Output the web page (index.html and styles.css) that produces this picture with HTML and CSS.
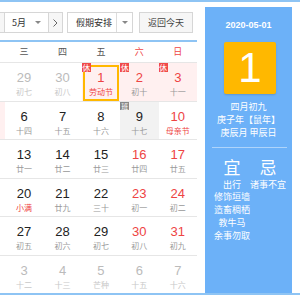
FILE: index.html
```html
<!DOCTYPE html>
<html lang="zh-CN">
<head>
<meta charset="utf-8">
<title>万年历</title>
<link rel="stylesheet" href="styles.css">
</head>
<body>
<div class="cal">
  <div class="main">
    <div class="toolbar">
      <div class="sel sel-year">2020年<span class="caret"></span></div>
      <div class="nav"><svg width="5" height="8" viewBox="0 0 5 8"><polyline points="4.5,0.5 1,4 4.5,7.5" fill="none" stroke="#666" stroke-width="1"/></svg></div>
      <div class="sel sel-month">5月<span class="caret"></span></div>
      <div class="nav"><svg width="5" height="8" viewBox="0 0 5 8"><polyline points="0.5,0.5 4,4 0.5,7.5" fill="none" stroke="#666" stroke-width="1"/></svg></div>
      <div class="sel sel-hol">假期安排<span class="split"><span class="caret"></span></span></div>
      <div class="btn">返回今天</div>
    </div>
    <div class="week">
      <span>一</span><span>二</span><span>三</span><span>四</span><span>五</span><span class="red">六</span><span class="red">日</span>
    </div>
    <div class="days">
      <div class="day other"><b>27</b><i>初五</i></div>
      <div class="day other"><b>28</b><i>初六</i></div>
      <div class="day other"><b>29</b><i>初七</i></div>
      <div class="day other"><b>30</b><i>初八</i></div>
      <div class="day hol today"><em class="tag">休</em><b>1</b><i class="fest">劳动节</i></div>
      <div class="day hol"><em class="tag">休</em><b>2</b><i>初十</i></div>
      <div class="day hol"><em class="tag">休</em><b>3</b><i>十一</i></div>

      <div class="day hol"><em class="tag">休</em><b>4</b><i class="fest">青年节</i></div>
      <div class="day hol"><em class="tag">休</em><b>5</b><i class="fest">立夏</i></div>
      <div class="day"><b>6</b><i>十四</i></div>
      <div class="day"><b>7</b><i>十五</i></div>
      <div class="day"><b>8</b><i>十六</i></div>
      <div class="day work"><em class="tag tag-work">班</em><b>9</b><i>十七</i></div>
      <div class="day we"><b>10</b><i class="fest">母亲节</i></div>

      <div class="day"><b>11</b><i>十九</i></div>
      <div class="day"><b>12</b><i>二十</i></div>
      <div class="day"><b>13</b><i>廿一</i></div>
      <div class="day"><b>14</b><i>廿二</i></div>
      <div class="day"><b>15</b><i>廿三</i></div>
      <div class="day we"><b>16</b><i>廿四</i></div>
      <div class="day we"><b>17</b><i>廿五</i></div>

      <div class="day"><b>18</b><i>廿六</i></div>
      <div class="day"><b>19</b><i>廿七</i></div>
      <div class="day"><b>20</b><i class="fest">小满</i></div>
      <div class="day"><b>21</b><i>廿九</i></div>
      <div class="day"><b>22</b><i>三十</i></div>
      <div class="day we"><b>23</b><i>初一</i></div>
      <div class="day we"><b>24</b><i>初二</i></div>

      <div class="day"><b>25</b><i>初三</i></div>
      <div class="day"><b>26</b><i>初四</i></div>
      <div class="day"><b>27</b><i>初五</i></div>
      <div class="day"><b>28</b><i>初六</i></div>
      <div class="day"><b>29</b><i>初七</i></div>
      <div class="day we"><b>30</b><i>初八</i></div>
      <div class="day we"><b>31</b><i>初九</i></div>

      <div class="day other"><b>1</b><i>儿童节</i></div>
      <div class="day other"><b>2</b><i>十一</i></div>
      <div class="day other"><b>3</b><i>十二</i></div>
      <div class="day other"><b>4</b><i>十三</i></div>
      <div class="day other"><b>5</b><i>芒种</i></div>
      <div class="day other"><b>6</b><i>十五</i></div>
      <div class="day other"><b>7</b><i>十六</i></div>
    </div>
  </div>
  <div class="side">
    <div class="side-date">2020-05-01</div>
    <div class="big">1</div>
    <div class="lunar-info">
      <div>四月初九</div>
      <div>庚子年【鼠年】</div>
      <div>庚辰月 甲辰日</div>
    </div>
    <div class="sep"></div>
    <div class="yj">
      <div class="yj-h">宜</div>
      <div class="yj-h">忌</div>
      <div class="yj-list">
        <div>出行</div>
        <div>修饰垣墙</div>
        <div>造畜稠栖</div>
        <div>教牛马</div>
        <div>余事勿取</div>
      </div>
      <div class="yj-list">
        <div>诸事不宜</div>
      </div>
    </div>
  </div>
</div>
</body>
</html>
```
FILE: styles.css
```css
html, body {
  margin: 0;
  padding: 0;
  background: #fff;
  overflow: hidden;
}
body {
  width: 300px;
  height: 300px;
  font-family: "Liberation Sans", "Noto Sans CJK SC", sans-serif;
  color: #333;
}
.cal {
  display: flex;
  align-items: flex-start;
  width: 372px;
  margin-left: -72px;
  border-top: 2px solid #8ec4f4;
  border-bottom: 2px solid #8ec4f4;
}
.main {
  flex: none;
  width: 269px;
}
.toolbar {
  display: flex;
  align-items: center;
  height: 21px;
  padding: 10px 0 7px 2px;
  border-bottom: 2px solid #8ec4f4;
  font-family: "Noto Sans CJK SC", sans-serif;
  font-size: 9px;
  color: #333;
}
.sel, .nav, .btn {
  box-sizing: border-box;
  height: 21px;
  border: 1px solid #d6d6d6;
  display: flex;
  align-items: center;
  line-height: 19px;
}
.sel {
  background: #fff;
  position: relative;
}
.sel-year {
  width: 56px;
  padding-left: 8px;
  margin-right: 4px;
}
.sel-month {
  width: 43px;
  padding-left: 7px;
  border-left: none;
  border-right: none;
}
.caret {
  width: 0;
  height: 0;
  border-left: 3px solid transparent;
  border-right: 3px solid transparent;
  border-top: 3px solid #888;
}
.sel-year .caret, .sel-month .caret {
  margin-left: auto;
  margin-right: 7px;
}
.nav {
  width: 15px;
  background: #f6f6f6;
  justify-content: center;
}
.sel-hol {
  width: 66px;
  margin-left: 4px;
  padding-left: 8px;
}
.split {
  margin-left: auto;
  width: 15px;
  height: 100%;
  border-left: 1px solid #dcdcdc;
  display: flex;
  align-items: center;
  justify-content: center;
}
.btn {
  width: 54px;
  margin-left: 6px;
  background: #f6f6f6;
  justify-content: center;
  color: #444;
}
.week {
  display: grid;
  grid-template-columns: repeat(7, 1fr);
  height: 20px;
  line-height: 20px;
  text-align: center;
  font-family: "Noto Sans CJK SC", sans-serif;
  font-size: 9px;
  color: #555;
}
.week .red {
  color: #ee4444;
}
.days {
  display: grid;
  grid-template-columns: repeat(7, 1fr);
  grid-auto-rows: 38.5px;
}
.day {
  position: relative;
  box-sizing: border-box;
  border-top: 1px solid #e6e6e6;
  padding-top: 7px;
  text-align: center;
}
.day b {
  display: block;
  font-weight: normal;
  font-family: "Liberation Sans", sans-serif;
  font-size: 13px;
  line-height: 16px;
  color: #222;
}
.day i {
  display: block;
  font-style: normal;
  font-family: "Noto Sans CJK SC", sans-serif;
  font-size: 8px;
  line-height: 12px;
  color: #999;
}
.day i.fest {
  color: #ee4444;
}
.day.we b, .day.hol b {
  color: #ee4444;
}
.day.hol {
  background: #fff0f0;
}
.day.work {
  background: #f2f2f2;
}
.day.other b {
  color: #bbb;
}
.day.other i {
  color: #c8c8c8;
}
.tag {
  position: absolute;
  top: 0;
  left: 0;
  width: 9px;
  height: 9px;
  background: #f04a4a;
  color: #fff;
  font-style: normal;
  font-family: "Noto Sans CJK SC", sans-serif;
  font-size: 8px;
  line-height: 9px;
  text-align: center;
  z-index: 2;
}
.tag-work {
  background: #888;
  height: 8px;
  line-height: 8px;
  font-size: 7px;
}
.today::after {
  content: "";
  position: absolute;
  left: 1px;
  right: 1px;
  top: 2px;
  bottom: 0;
  border: 2px solid #ffb800;
}
.side {
  flex: none;
  box-sizing: border-box;
  width: 87px;
  height: 286px;
  margin: 5px 0 0 8px;
  padding-top: 12px;
  background: #6cb1f8;
  color: #fff;
  font-family: "Noto Sans CJK SC", sans-serif;
  text-align: center;
}
.side-date {
  font-family: "Liberation Sans", sans-serif;
  font-size: 9px;
  font-weight: bold;
  line-height: 12px;
}
.big {
  width: 52px;
  height: 52px;
  margin: 11px 0 0 19px;
  background: #ffb800;
  border-radius: 2px;
  box-shadow: 0 1px 2px rgba(0, 0, 0, 0.15);
  font-family: "Liberation Sans", sans-serif;
  font-size: 42px;
  line-height: 52px;
  color: #fff;
}
.lunar-info {
  margin-top: 6px;
  font-size: 9px;
  line-height: 13px;
}
.sep {
  height: 1px;
  margin: 8px 5px 0 7px;
  background: rgba(255, 255, 255, 0.45);
}
.yj {
  display: grid;
  grid-template-columns: 36px 36px;
  padding-left: 9px;
}
.yj-h {
  margin-top: 9px;
  font-size: 17px;
  line-height: 20px;
}
.yj-list {
  margin-top: 1.5px;
  font-size: 9px;
  line-height: 12.75px;
  white-space: nowrap;
}
```
